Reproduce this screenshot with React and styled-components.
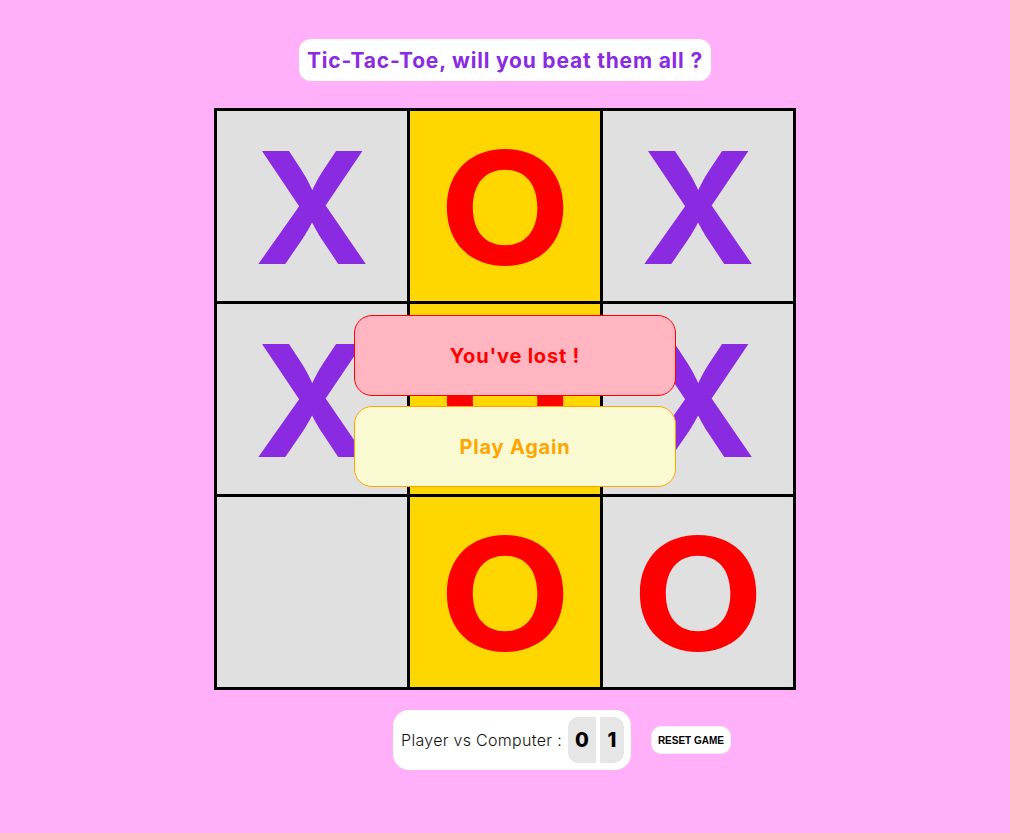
import React from "react";
import styled, { createGlobalStyle } from "styled-components";

const GlobalStyle = createGlobalStyle`
  body {
    margin: 0;
    background: #ffb0f9;
    font-family: Inter, "Open Sans", sans-serif;
  }
`;

const Page = styled.div`
  display: flex;
  flex-direction: column;
  align-items: center;
  padding-top: 39px;
  min-height: 833px;
  box-sizing: border-box;
`;

const Title = styled.h1`
  margin: 0;
  padding: 0 8px;
  height: 42px;
  display: flex;
  align-items: center;
  background: #fff;
  border-radius: 12px;
  color: #8a2be2;
  font-size: 21px;
  font-weight: 700;
  letter-spacing: 0.8px;
`;

const BoardWrap = styled.div`
  position: relative;
  margin-top: 27px;
`;

const Board = styled.div`
  display: grid;
  grid-template-columns: repeat(3, 190px);
  grid-template-rows: repeat(3, 190px);
  gap: 3px;
  padding: 3px;
  background: #000;
`;

const Cell = styled.div`
  display: flex;
  align-items: center;
  justify-content: center;
  background: ${(p) => (p.$win ? "#ffd700" : "#e0e0e0")};
  color: ${(p) => (p.$mark === "X" ? "#8a2be2" : "#ff0000")};
  font-size: 156px;
  font-weight: 700;
  line-height: 1;
  padding-top: 4px;
  box-sizing: border-box;
`;

const Mark = styled.span`
  display: inline-block;
  transform: ${(p) => (p.$mark === "O" ? "scaleX(1.1)" : "none")};
`;

const Overlay = styled.div`
  position: absolute;
  left: 140px;
  top: 207px;
  width: 322px;
  display: flex;
  flex-direction: column;
  gap: 10px;
`;

const Banner = styled.div`
  height: 81px;
  box-sizing: border-box;
  display: flex;
  align-items: center;
  justify-content: center;
  border-radius: 18px;
  border: 1px solid ${(p) => p.$border};
  background: ${(p) => p.$bg};
  color: ${(p) => p.$color};
  font-size: 20px;
  font-weight: 700;
  letter-spacing: 0.8px;
  cursor: ${(p) => (p.$button ? "pointer" : "default")};
`;

const Footer = styled.div`
  display: flex;
  align-items: center;
  gap: 20px;
  margin-top: 20px;
  padding-left: 114px;
`;

const ScoreBox = styled.div`
  display: flex;
  align-items: center;
  gap: 5px;
  height: 60px;
  box-sizing: border-box;
  padding: 0 7px 0 8px;
  background: #fff;
  border-radius: 16px;
`;

const ScoreLabel = styled.span`
  font-size: 16px;
  font-weight: 300;
  letter-spacing: 0.3px;
  color: #111;
  margin-right: 1px;
`;

const ScoreCells = styled.div`
  display: flex;
  gap: 4px;
`;

const ScoreCell = styled.div`
  width: ${(p) => p.$w}px;
  height: 46px;
  display: flex;
  align-items: center;
  justify-content: center;
  background: #e6e6e6;
  font-size: 20px;
  font-weight: 800;
  color: #000;
  border-radius: ${(p) => (p.$first ? "10px 0 0 10px" : "0 10px 10px 0")};
`;

const ResetButton = styled.button`
  height: 28px;
  width: 80px;
  padding: 0;
  background: #fff;
  border: 1px solid #eee;
  border-radius: 10px;
  font-family: "Liberation Sans", Arial, sans-serif;
  font-size: 10px;
  font-weight: 700;
  color: #000;
  cursor: pointer;
`;

const cells = [
  { m: "X" }, { m: "O", w: true }, { m: "X" },
  { m: "X" }, { m: "O", w: true }, { m: "X" },
  { m: "" }, { m: "O", w: true }, { m: "O" },
];

export default function App() {
  return (
    <>
      <GlobalStyle />
      <Page>
        <Title>Tic-Tac-Toe, will you beat them all ?</Title>
        <BoardWrap>
          <Board>
            {cells.map((c, i) => (
              <Cell key={i} $mark={c.m} $win={c.w}>
                <Mark $mark={c.m}>{c.m}</Mark>
              </Cell>
            ))}
          </Board>
          <Overlay>
            <Banner $bg="#ffb6c1" $border="#ff0000" $color="#ff0000">
              You've lost !
            </Banner>
            <Banner $bg="#fafad2" $border="#ffa500" $color="#ffa500" $button>
              Play Again
            </Banner>
          </Overlay>
        </BoardWrap>
        <Footer>
          <ScoreBox>
            <ScoreLabel>Player vs Computer :</ScoreLabel>
            <ScoreCells>
              <ScoreCell $first $w={28}>0</ScoreCell>
              <ScoreCell $w={24}>1</ScoreCell>
            </ScoreCells>
          </ScoreBox>
          <ResetButton>RESET GAME</ResetButton>
        </Footer>
      </Page>
    </>
  );
}
